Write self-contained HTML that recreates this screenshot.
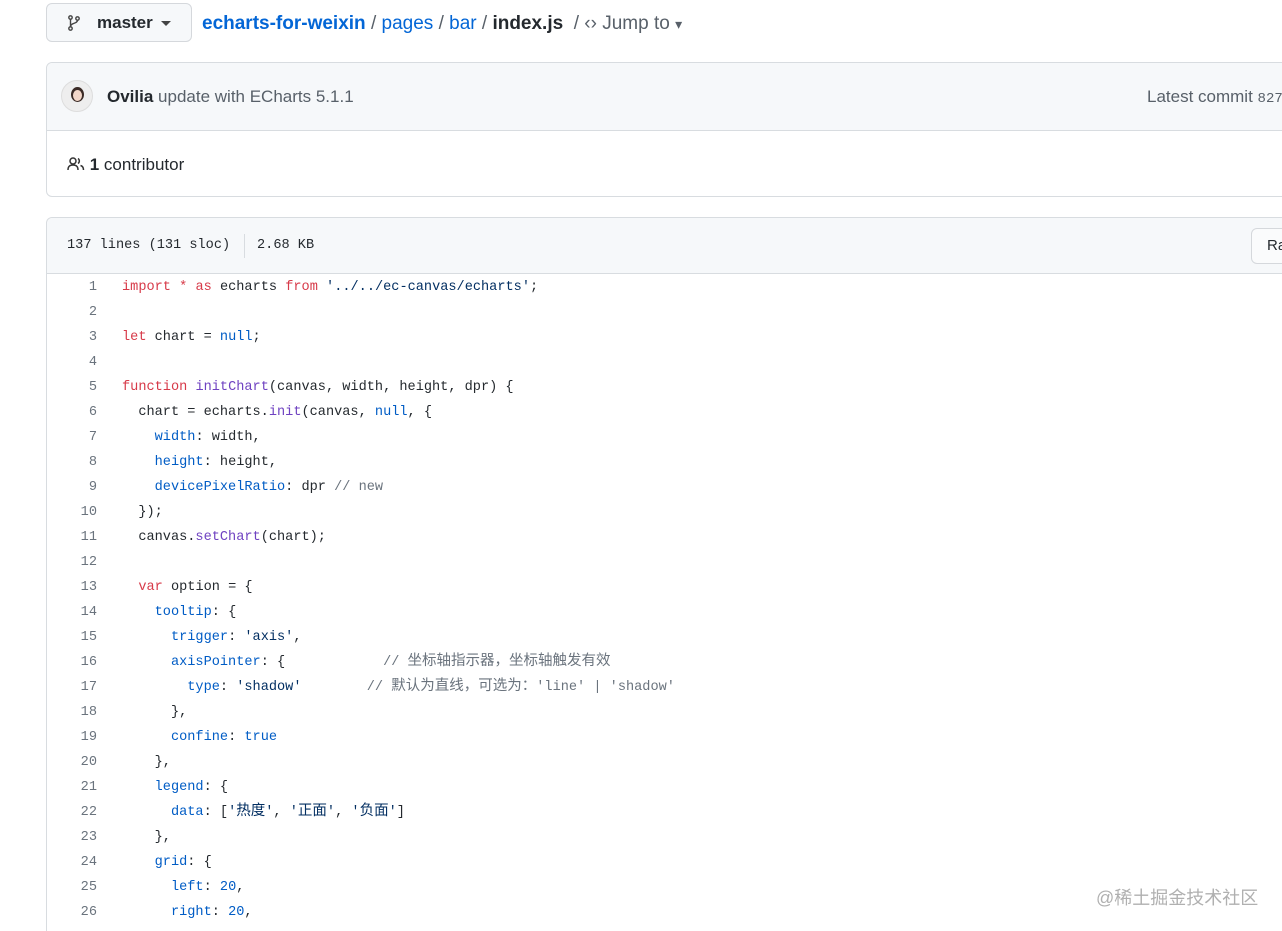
<!DOCTYPE html>
<html style="width:1282px;height:931px;overflow:hidden"><head><meta charset="utf-8"><style>
*{margin:0;padding:0;box-sizing:border-box}
body{width:1282px;height:931px;overflow:hidden;background:#fff;font-family:"Liberation Sans","Noto Sans CJK SC",sans-serif;color:#24292e;position:relative}
.btn{position:absolute;left:46px;top:3px;width:146px;height:39px;border:1px solid #d5d8dc;border-radius:6px;background:#f6f8fa;font-size:17px;font-weight:bold}
.crumb{position:absolute;left:202px;top:13px;font-size:19px;white-space:nowrap}
.crumb a{color:#0366d6;text-decoration:none}
.box1{position:absolute;left:46px;top:62px;width:1300px;height:135px;border:1px solid #d8dce0;border-radius:6px}
.box1 .hd{height:68px;background:#f6f8fa;border-bottom:1px solid #d8dce0;border-radius:6px 6px 0 0;position:relative}
.av{position:absolute;left:14px;top:17px;width:32px;height:32px;border-radius:50%;background:#eee;border:1px solid #ddd;overflow:hidden}
.box2{position:absolute;left:46px;top:217px;width:1300px;height:714px;border:1px solid #d8dce0;border-bottom:0;border-radius:6px 6px 0 0}
.box2 .hd{height:56px;background:#f6f8fa;border-bottom:1px solid #d8dce0;border-radius:6px 6px 0 0;position:relative;font-family:"Liberation Mono",monospace;font-size:13.6px}
.ln{position:absolute;left:0;width:51px;text-align:right;font-family:"Liberation Mono",monospace;font-size:13.6px;color:#6a737d;line-height:25px}
.cd{position:absolute;left:76px;font-family:"Liberation Mono","Noto Sans CJK SC",monospace;font-size:13.6px;line-height:25px;white-space:pre;color:#24292e}
.k{color:#d73a49}.f{color:#6f42c1}.c{color:#005cc5}.s{color:#032f62}.m{color:#6a737d}
.m i{font-style:normal;font-size:14.5px}
</style></head><body>
<div class="btn">
<svg style="position:absolute;left:21px;top:11px" width="12" height="16" viewBox="0 0 12 16"><circle cx="2.5" cy="2.5" r="1.7" fill="none" stroke="#444" stroke-width="1.4"/><circle cx="2.5" cy="13.5" r="1.7" fill="none" stroke="#444" stroke-width="1.4"/><circle cx="9.5" cy="3.5" r="1.7" fill="none" stroke="#444" stroke-width="1.4"/><path d="M2.5 4.2V11.8M9.5 5.2C9.5 9 2.5 7.5 2.5 11.8" fill="none" stroke="#444" stroke-width="1.4"/></svg>
<span style="position:absolute;left:50px;top:9px">master</span>
<span style="position:absolute;left:114px;top:17px;border:5px solid transparent;border-top-color:#444;border-bottom:0"></span>
</div>
<div class="crumb"><a style="font-weight:bold">echarts-for-weixin</a> <span style="color:#586069">/</span> <a>pages</a> <span style="color:#586069">/</span> <a>bar</a> <span style="color:#586069">/</span> <b>index.js</b> &nbsp;<span style="color:#586069">/ ‹› Jump to <span style="font-size:14px">▾</span></span></div>
<div class="box1"><div class="hd"><div class="av"><div style="position:absolute;left:9px;top:6px;width:13px;height:15px;border-radius:50%;background:#3a2a25"></div><div style="position:absolute;left:11px;top:9px;width:9px;height:11px;border-radius:50%;background:#f2d6c8"></div></div>
<span style="position:absolute;left:60px;top:24px;font-size:17px"><b>Ovilia</b> <span style="color:#586069">update with ECharts 5.1.1</span></span>
<span style="position:absolute;left:1100px;top:24px;font-size:17px;color:#586069;white-space:nowrap">Latest commit <span style="font-family:'Liberation Mono';font-size:14px">827</span></span></div>
<div style="position:absolute;left:20px;top:92px;font-size:17px;white-space:nowrap"><svg width="18" height="14" viewBox="0 0 18 14" style="vertical-align:-1px"><circle cx="6" cy="4" r="3" fill="none" stroke="#333" stroke-width="1.5"/><path d="M1 13c0-4 2-5 5-5s5 1 5 5M11 1.5a3 3 0 010 5M13.5 8.5c2 .5 3 2 3 4.5" fill="none" stroke="#333" stroke-width="1.5"/></svg> <b>1</b> contributor</div></div>
<div class="box2"><div class="hd"><span style="position:absolute;left:20px;top:20px">137 lines (131 sloc)</span><span style="position:absolute;left:197px;top:16px;width:1px;height:24px;background:#d8dce0"></span><span style="position:absolute;left:210px;top:20px">2.68 KB</span>
<div style="position:absolute;left:1204px;top:10px;width:60px;height:36px;border:1px solid #d5d8dc;border-radius:6px;background:#fafbfc;font-family:'Liberation Sans';font-size:15px;padding:8px 15px">Raw</div></div>
</div>
<div style="position:absolute;left:46px;top:275px">
<div class="ln" style="top:0">1<br>2<br>3<br>4<br>5<br>6<br>7<br>8<br>9<br>10<br>11<br>12<br>13<br>14<br>15<br>16<br>17<br>18<br>19<br>20<br>21<br>22<br>23<br>24<br>25<br>26</div>
<div class="cd" style="top:0"><span class="k">import</span> <span class="k">*</span> <span class="k">as</span> echarts <span class="k">from</span> <span class="s">'../../ec-canvas/echarts'</span>;

<span class="k">let</span> chart = <span class="c">null</span>;

<span class="k">function</span> <span class="f">initChart</span>(canvas, width, height, dpr) {
  chart = echarts.<span class="f">init</span>(canvas, <span class="c">null</span>, {
    <span class="c">width</span>: width,
    <span class="c">height</span>: height,
    <span class="c">devicePixelRatio</span>: dpr <span class="m">// new</span>
  });
  canvas.<span class="f">setChart</span>(chart);

  <span class="k">var</span> option = {
    <span class="c">tooltip</span>: {
      <span class="c">trigger</span>: <span class="s">'axis'</span>,
      <span class="c">axisPointer</span>: {            <span class="m">// <i>坐标轴指示器，坐标轴触发有效</i></span>
        <span class="c">type</span>: <span class="s">'shadow'</span>        <span class="m">// <i>默认为直线，可选为：</i>'line' | 'shadow'</span>
      },
      <span class="c">confine</span>: <span class="c">true</span>
    },
    <span class="c">legend</span>: {
      <span class="c">data</span>: [<span class="s">'<i style="font-style:normal;font-size:14.5px">热度</i>'</span>, <span class="s">'<i style="font-style:normal;font-size:14.5px">正面</i>'</span>, <span class="s">'<i style="font-style:normal;font-size:14.5px">负面</i>'</span>]
    },
    <span class="c">grid</span>: {
      <span class="c">left</span>: <span class="c">20</span>,
      <span class="c">right</span>: <span class="c">20</span>,</div>
</div>
<div style="position:absolute;left:1096px;top:884px;font-size:18px;color:#b0b0b0;white-space:nowrap">@稀土掘金技术社区</div>
</body></html>
